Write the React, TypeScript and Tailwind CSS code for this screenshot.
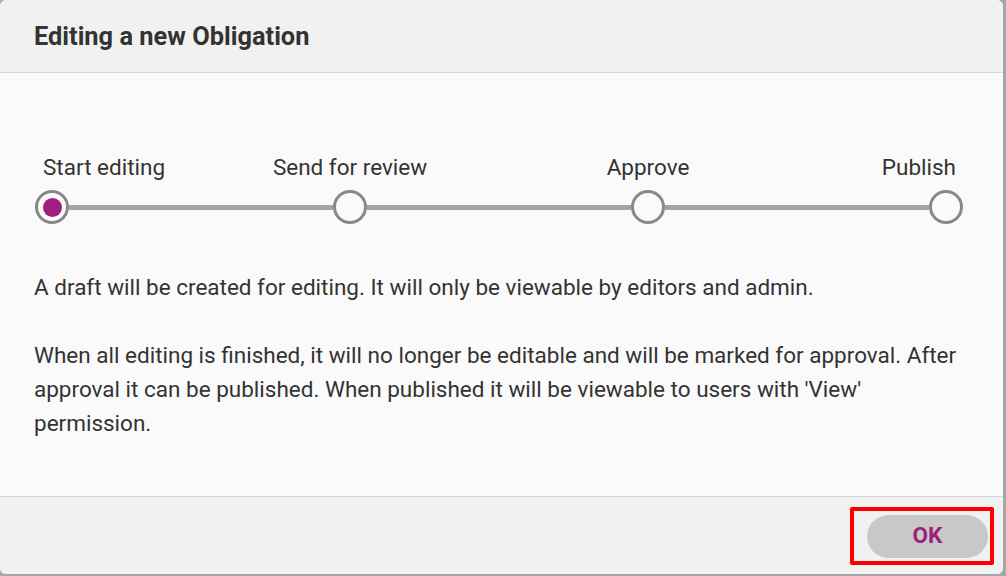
import React from "react";

// 承認フローのステップ表示付きダイアログ
const STEPS = ["Start editing", "Send for review", "Approve", "Publish"];

function StepLabels() {
  return (
    <div className="flex h-[24px] items-center">
      {STEPS.map((label, i) => {
        const align =
          i === 0 ? "justify-start pl-[8px]" : i === STEPS.length - 1 ? "justify-end pr-[7px]" : "justify-center";
        return (
          <React.Fragment key={label}>
            {i > 0 && <div className="flex-1" />}
            <div className={"flex w-[34px] whitespace-nowrap " + align}>
              <span className="text-[22.5px] leading-[24px] text-[#333333]">{label}</span>
            </div>
          </React.Fragment>
        );
      })}
    </div>
  );
}

function StepTrack({ current }: { current: number }) {
  return (
    <div className="flex items-center">
      {STEPS.map((label, i) => (
        <React.Fragment key={label}>
          {i > 0 && <div className="h-[5px] flex-1 bg-[#a4a4a4]" />}
          <div className="flex h-[34px] w-[34px] shrink-0 items-center justify-center rounded-full border-[3px] border-[#888888] bg-[#fafafa]">
            {i === current && <div className="h-[19px] w-[19px] rounded-full bg-[#9e1f7f]" />}
          </div>
        </React.Fragment>
      ))}
    </div>
  );
}

export default function App() {
  return (
    <div
      className="h-[576px] w-[1006px] bg-[#a6a6a6]"
      style={{ fontFamily: "Roboto, 'Noto Sans', sans-serif" }}
    >
      <div className="flex h-[574px] w-[1003px] flex-col overflow-hidden rounded-[6px] bg-[#fafafa]">
        {/* ===== ヘッダー ===== */}
        <div className="flex h-[73px] shrink-0 items-center border-b border-[#d6d6d6] bg-[#f1f1f1] px-[34px] pt-[2px]">
          <h1 className="text-[25.4px] font-bold leading-none text-[#333333]">Editing a new Obligation</h1>
        </div>

        {/* ===== 本文 ===== */}
        <div className="flex-1 px-[34px] pt-[82px]">
          <div className="ml-[1px] w-[928px]">
            <StepLabels />
            <div className="mt-[11px]">
              <StepTrack current={0} />
            </div>
          </div>
          <div className="mt-[46px] space-y-[34px] pr-[8px] text-[22.5px] leading-[34px] text-[#333333]">
            <p>A draft will be created for editing. It will only be viewable by editors and admin.</p>
            <p>
              When all editing is finished, it will no longer be editable and will be marked for approval. After
              approval it can be published. When published it will be viewable to users with 'View' permission.
            </p>
          </div>
        </div>

        {/* ===== フッター ===== */}
        <div className="flex h-[78px] shrink-0 items-center justify-end border-t border-[#d6d6d6] bg-[#f1f1f1] pr-[9px]">
          <div className="rounded-[2px] border-4 border-[#ff0000] pb-[3px] pl-[13px] pr-[2px] pt-[4px]">
            <button
              type="button"
              className="h-[43px] w-[121px] rounded-full bg-[#c8c8c8] text-[22.5px] font-bold text-[#9e1f7f]"
            >
              OK
            </button>
          </div>
        </div>
      </div>
    </div>
  );
}
